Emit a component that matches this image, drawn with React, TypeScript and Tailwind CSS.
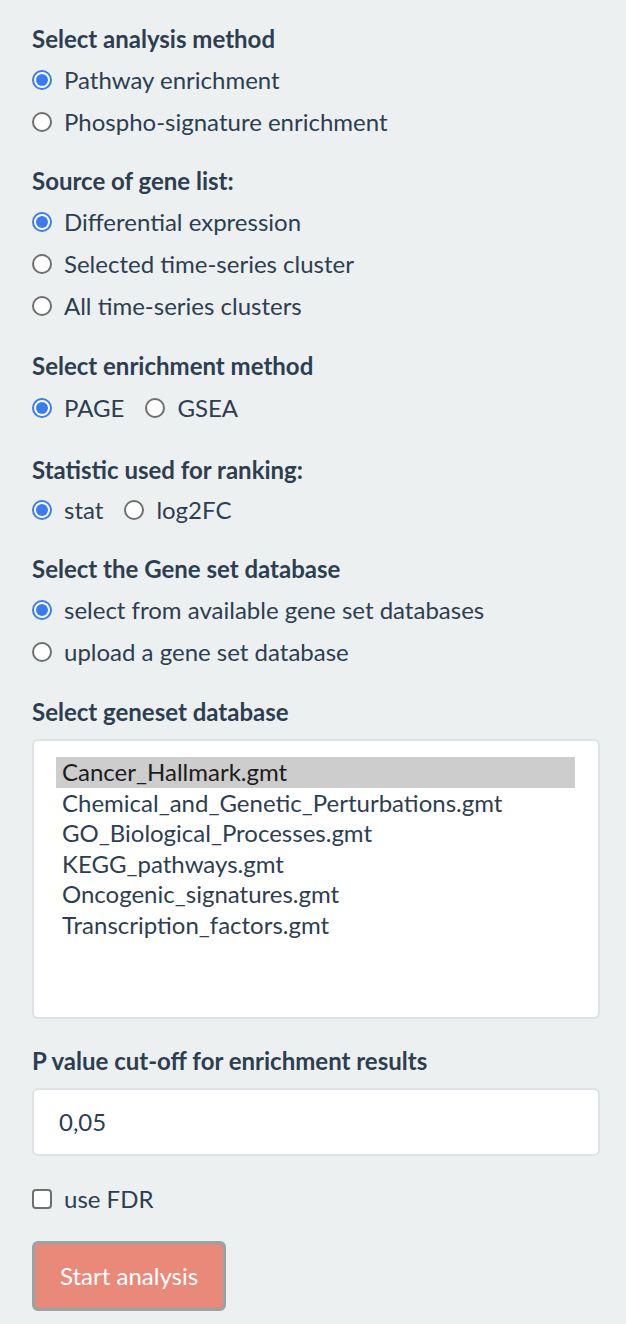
import React from 'react';

const Radio = ({ checked }: { checked?: boolean }) =>
  checked ? (
    <span className="flex h-5 w-5 shrink-0 items-center justify-center rounded-full border-2 border-[#3a7cf0] bg-white">
      <span className="h-3 w-3 rounded-full bg-[#3a7cf0]" />
    </span>
  ) : (
    <span className="h-5 w-5 shrink-0 rounded-full border-2 border-[#6f6f6f] bg-white" />
  );

const RadioRow = ({ label, checked }: { label: string; checked?: boolean }) => (
  <div className="flex h-[42px] items-center gap-3">
    <Radio checked={checked} />
    <span>{label}</span>
  </div>
);

const Heading = ({ children }: { children: React.ReactNode }) => (
  <div className="h-[30px] leading-[30px] font-bold">{children}</div>
);

const options = [
  'Cancer_Hallmark.gmt',
  'Chemical_and_Genetic_Perturbations.gmt',
  'GO_Biological_Processes.gmt',
  'KEGG_pathways.gmt',
  'Oncogenic_signatures.gmt',
  'Transcription_factors.gmt',
];

export default function App() {
  return (
    <div
      className="min-h-[1324px] bg-[#ecf0f1] pt-6 pr-[26px] pl-8 text-[24px] text-[#2c3e50]"
      style={{ fontFamily: 'Lato, "Open Sans", sans-serif' }}
    >
      {/* analysis method */}
      <Heading>Select analysis method</Heading>
      <div className="mt-[5px] mb-[23px]">
        <RadioRow label="Pathway enrichment" checked />
        <RadioRow label="Phospho-signature enrichment" />
      </div>

      <Heading>Source of gene list:</Heading>
      <div className="mt-[5px] mb-[24px]">
        <RadioRow label="Differential expression" checked />
        <RadioRow label="Selected time-series cluster" />
        <RadioRow label="All time-series clusters" />
      </div>

      <Heading>Select enrichment method</Heading>
      <div className="mt-[6px] mb-[26px] flex h-[42px] items-center">
        <div className="flex items-center gap-3">
          <Radio checked />
          <span>PAGE</span>
        </div>
        <div className="ml-[21px] flex items-center gap-3">
          <Radio />
          <span>GSEA</span>
        </div>
      </div>

      <Heading>Statistic used for ranking:</Heading>
      <div className="mt-[4px] mb-[23px] flex h-[42px] items-center">
        <div className="flex items-center gap-3">
          <Radio checked />
          <span>stat</span>
        </div>
        <div className="ml-[21px] flex items-center gap-3">
          <Radio />
          <span>log2FC</span>
        </div>
      </div>

      <Heading>Select the Gene set database</Heading>
      <div className="mt-[5px] mb-[24px]">
        <RadioRow label="select from available gene set databases" checked />
        <RadioRow label="upload a gene set database" />
      </div>

      <Heading>Select geneset database</Heading>
      <div className="mt-3 h-[280px] rounded-md border-2 border-[#dee2e6] bg-white pt-[16px] pr-[23px] pl-[22px]">
        {options.map((o, i) => (
          <div
            key={o}
            className={
              i === 0
                ? 'h-[30.5px] bg-[#cdcdcd] px-[6px] leading-[30px] text-[#1c1c1c]'
                : 'h-[30.5px] px-[6px] leading-[30px]'
            }
          >
            {o}
          </div>
        ))}
      </div>

      <div className="mt-[27px]">
        <Heading>P value cut-off for enrichment results</Heading>
      </div>
      <div className="mt-3 flex h-[68px] items-center rounded-md border-2 border-[#dee2e6] bg-white px-[25px]">
        0,05
      </div>

      <div className="mt-[22px] flex h-[42px] items-center gap-3">
        <span className="h-5 w-5 rounded-[4px] border-2 border-[#6f6f6f] bg-white" />
        <span>use FDR</span>
      </div>

      <button className="mt-[21px] h-[70px] rounded-md border-[3px] border-[#95a5a6] bg-[#e9897a] px-[25px] text-[24px] text-white">
        Start analysis
      </button>
    </div>
  );
}
